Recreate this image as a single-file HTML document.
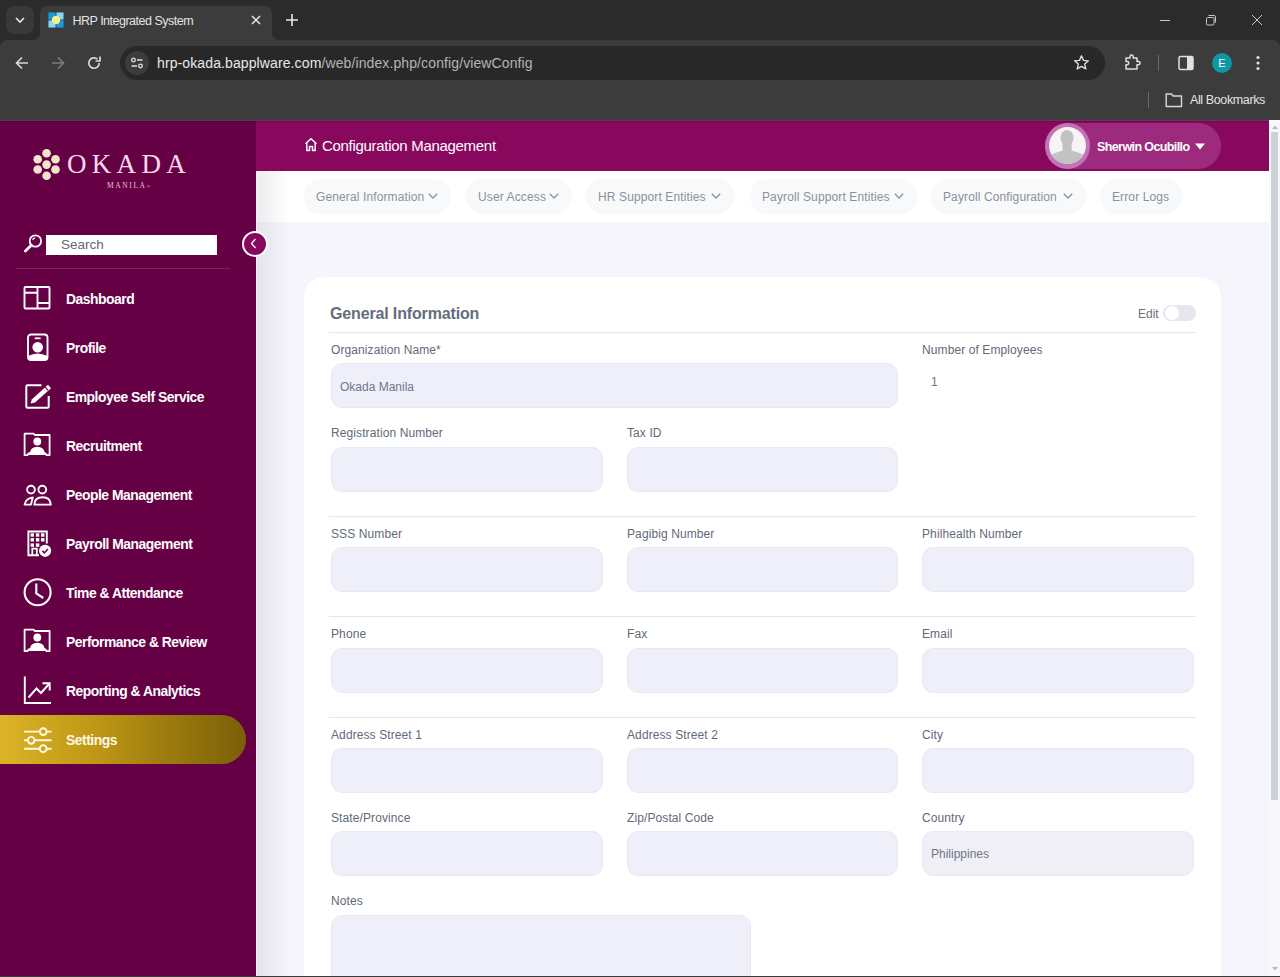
<!DOCTYPE html>
<html><head><meta charset="utf-8">
<style>
*{box-sizing:border-box;margin:0;padding:0}
html,body{width:1280px;height:977px;overflow:hidden;background:#2b2b2b;font-family:"Liberation Sans",sans-serif}
.abs{position:absolute}
/* chrome */
#strip{position:absolute;left:0;top:0;width:1280px;height:40px;background:#2b2b2b}
#tab{position:absolute;left:40px;top:6px;width:232px;height:34px;background:#3c3c3c;border-radius:8px 8px 0 0}
#toolbar{position:absolute;left:0;top:40px;width:1280px;height:80px;background:#3c3c3c;border-radius:8px 8px 0 0}
#addr{position:absolute;left:120px;top:46px;width:985px;height:34px;background:#282828;border-radius:17px}
.ctext{color:#e3e3e3;font-size:12px;position:absolute;white-space:nowrap}
/* page */
#page{position:absolute;left:0;top:120px;width:1280px;height:857px;background:#f5f5fb;overflow:hidden}
#side{position:absolute;left:0;top:0;width:256px;height:857px;background:#660044}
#header{position:absolute;left:256px;top:0;width:1013px;height:51px;background:#88085e}
#tabs{position:absolute;left:256px;top:51px;width:1013px;height:51px;background:#fff}
#scroll{position:absolute;left:1269px;top:0;width:11px;height:857px;background:#f8f8fb}
#thumb{position:absolute;left:2px;top:12px;width:7px;height:668px;background:#cdd1da}
.nav{position:absolute;left:0;width:256px;height:49px}
.nav span{position:absolute;left:66px;top:1.5px;line-height:49px;color:#fff;font-weight:bold;font-size:14.6px;letter-spacing:-0.5px;white-space:nowrap;transform:scaleX(0.95);transform-origin:0 50%}
.nav svg{position:absolute;left:22px;top:10px}
.pill{position:absolute;top:8px;height:35px;background:#f8f9fb;border-radius:17px;color:#8a919c;font-size:12px;letter-spacing:0.12px;line-height:37px;padding-left:12px;white-space:nowrap}
#card{position:absolute;left:304px;top:157px;width:917px;height:760px;background:#fff;border-radius:20px}
.lbl{position:absolute;font-size:12px;color:#626a78;letter-spacing:0.1px;white-space:nowrap}
.inp{position:absolute;height:45px;background:#efeffa;border:1px solid #e9e9f4;border-radius:11px}
.hr{position:absolute;height:1px;background:#e6e6ea}
</style></head><body>
<div id="strip"></div>
<div class="abs" style="left:6px;top:6px;width:28px;height:28px;background:#383838;border-radius:8px"></div>
<svg class="abs" style="left:14px;top:14px" width="12" height="12" viewBox="0 0 12 12"><path d="M2 4 L6 8 L10 4" fill="none" stroke="#e8e8e8" stroke-width="1.6"/></svg>
<div id="tab"></div>
<svg class="abs" style="left:32px;top:32px" width="8" height="8" viewBox="0 0 8 8"><path d="M0 8 Q8 8 8 0 L8 8 Z" fill="#3c3c3c"/></svg>
<svg class="abs" style="left:272px;top:32px" width="8" height="8" viewBox="0 0 8 8"><path d="M8 8 Q0 8 0 0 L0 8 Z" fill="#3c3c3c"/></svg>
<svg class="abs" style="left:48px;top:12px" width="16" height="16" viewBox="0 0 16 16">
<rect x="0" y="0" width="16" height="16" fill="#1d4f6e"/>
<rect x="0.5" y="0.5" width="7" height="7" fill="#1e9ad8"/><rect x="8.5" y="0.5" width="7" height="7" fill="#93d3ea"/>
<rect x="0.5" y="8.5" width="7" height="7" fill="#93d3ea"/><rect x="8.5" y="8.5" width="7" height="7" fill="#1e9ad8"/>
<circle cx="8" cy="8" r="4.2" fill="#f4f08a"/></svg>
<svg class="abs" style="left:251px;top:15px" width="10" height="10" viewBox="0 0 10 10"><path d="M1 1 L9 9 M9 1 L1 9" stroke="#e8e8e8" stroke-width="1.5"/></svg>
<svg class="abs" style="left:285px;top:13px" width="14" height="14" viewBox="0 0 14 14"><path d="M7 1 V13 M1 7 H13" stroke="#e8e8e8" stroke-width="1.6"/></svg>
<svg class="abs" style="left:1160px;top:20px" width="10" height="1" viewBox="0 0 10 1"><rect width="10" height="1" fill="#c8c8c8"/></svg>
<svg class="abs" style="left:1205px;top:14px" width="12" height="12" viewBox="0 0 12 12"><rect x="1.5" y="3.5" width="7.5" height="7.5" rx="1.2" fill="none" stroke="#c8c8c8" stroke-width="1"/><path d="M3.5 1.5 H9 Q10.5 1.5 10.5 3 V8.5" fill="none" stroke="#c8c8c8" stroke-width="1"/></svg>
<svg class="abs" style="left:1251px;top:14px" width="12" height="12" viewBox="0 0 12 12"><path d="M1 1 L11 11 M11 1 L1 11" stroke="#c8c8c8" stroke-width="1"/></svg>
<div id="toolbar"></div>
<svg class="abs" style="left:14px;top:55px" width="16" height="16" viewBox="0 0 16 16"><path d="M14 8 H3 M8 2.5 L2.5 8 L8 13.5" fill="none" stroke="#d8d8d8" stroke-width="1.7"/></svg>
<svg class="abs" style="left:50px;top:55px" width="16" height="16" viewBox="0 0 16 16"><path d="M2 8 H13 M8 2.5 L13.5 8 L8 13.5" fill="none" stroke="#7c7c7c" stroke-width="1.7"/></svg>
<svg class="abs" style="left:86px;top:55px" width="16" height="16" viewBox="0 0 16 16"><path d="M13.2 8 A5.2 5.2 0 1 1 11.5 4.2" fill="none" stroke="#d8d8d8" stroke-width="1.7"/><path d="M14 1.5 V6 H9.5" fill="none" stroke="#d8d8d8" stroke-width="1.7"/></svg>
<div id="addr"></div>
<div class="abs" style="left:125px;top:51px;width:24px;height:24px;border-radius:12px;background:#3c3c3c"></div>
<svg class="abs" style="left:130px;top:56px" width="14" height="14" viewBox="0 0 14 14"><circle cx="3.5" cy="4" r="1.8" fill="none" stroke="#e0e0e0" stroke-width="1.3"/><path d="M7 4 H12.5" stroke="#e0e0e0" stroke-width="1.5"/><circle cx="10.5" cy="10" r="1.8" fill="none" stroke="#e0e0e0" stroke-width="1.3"/><path d="M1.5 10 H7" stroke="#e0e0e0" stroke-width="1.5"/></svg>
<div class="ctext" style="left:72.5px;top:14px;font-size:12.5px;letter-spacing:-0.5px">HRP Integrated System</div>
<div class="ctext" style="left:157px;top:55px;font-size:14px;letter-spacing:0.11px;color:#e8e8e8">hrp-okada.bapplware.com<span style="color:#b4b4b4">/web/index.php/config/viewConfig</span></div>
<svg class="abs" style="left:1073px;top:54px" width="17" height="17" viewBox="0 0 24 24"><path d="M12 2.5 L14.8 9 L21.8 9.6 L16.5 14.2 L18.1 21.1 L12 17.4 L5.9 21.1 L7.5 14.2 L2.2 9.6 L9.2 9 Z" fill="none" stroke="#e0e0e0" stroke-width="1.9" stroke-linejoin="round"/></svg>
<svg class="abs" style="left:1123px;top:53px" width="19" height="19" viewBox="0 0 19 19"><path d="M3 5 H7 V3.5 A1.6 1.6 0 0 1 10.2 3.5 V5 H14 V8.5 H15.5 A1.6 1.6 0 0 1 15.5 11.7 H14 V16 H3 V11.7 H4.2 A1.6 1.6 0 0 0 4.2 8.5 H3 Z" fill="none" stroke="#e0e0e0" stroke-width="1.5" stroke-linejoin="round"/></svg>
<div class="abs" style="left:1158px;top:55px;width:1px;height:16px;background:#6a6a6a"></div>
<svg class="abs" style="left:1178px;top:55px" width="16" height="16" viewBox="0 0 16 16"><rect x="1" y="1.5" width="14" height="13" rx="1.5" fill="none" stroke="#e0e0e0" stroke-width="1.5"/><rect x="9" y="1.5" width="6" height="13" fill="#e0e0e0"/></svg>
<div class="abs" style="left:1212px;top:53px;width:20px;height:20px;border-radius:10px;background:#0f97a4;color:#fff;font-size:11px;line-height:20px;text-align:center">E</div>
<svg class="abs" style="left:1255px;top:55px" width="6" height="16" viewBox="0 0 6 16"><circle cx="3" cy="2.5" r="1.6" fill="#e0e0e0"/><circle cx="3" cy="8" r="1.6" fill="#e0e0e0"/><circle cx="3" cy="13.5" r="1.6" fill="#e0e0e0"/></svg>
<div class="abs" style="left:1148px;top:92px;width:1px;height:16px;background:#6a6a6a"></div>
<svg class="abs" style="left:1165px;top:92px" width="18" height="16" viewBox="0 0 18 16"><path d="M1.2 2 H6.5 L8.2 4 H16.5 V14.5 H1.2 Z" fill="none" stroke="#d8d8d8" stroke-width="1.4" stroke-linejoin="round"/></svg>
<div class="ctext" style="left:1190px;top:93px;font-size:12.5px;letter-spacing:-0.38px">All Bookmarks</div>

<div id="page">
  <div id="side">
  <svg class="abs" style="left:30px;top:28px" width="34" height="36" viewBox="0 0 34 36">
   <g fill="#f3e4cc"><circle cx="16.6" cy="5.3" r="4.3"/><circle cx="16.6" cy="16.6" r="4.3"/><circle cx="16.6" cy="27.8" r="4.3"/>
   <circle cx="7.7" cy="11.3" r="4.3"/><circle cx="25.5" cy="11.3" r="4.3"/><circle cx="7.7" cy="21.5" r="4.3"/><circle cx="25.5" cy="21.5" r="4.3"/></g></svg>
  <div class="abs" style="left:67px;top:28px;font-family:'Liberation Serif',serif;font-size:27px;color:#f7d9e8;letter-spacing:5.3px;line-height:32px;white-space:nowrap">OKADA</div>
  <div class="abs" style="left:107px;top:60.5px;font-family:'Liberation Serif',serif;font-size:7.5px;color:#e9c2da;letter-spacing:1.6px;line-height:10px;white-space:nowrap">MANILA<span style="font-size:5px;letter-spacing:0">&reg;</span></div>
  <svg class="abs" style="left:23px;top:113px" width="20" height="20" viewBox="0 0 20 20"><circle cx="12.4" cy="8" r="5.7" fill="none" stroke="#fff" stroke-width="1.8"/><path d="M9.6 7.2 A3 3 0 0 1 12.2 4.8" fill="none" stroke="#fff" stroke-width="1.2"/><path d="M8.3 12.2 L2.4 18.1" stroke="#fff" stroke-width="2.8" stroke-linecap="round"/></svg>
  <div class="abs" style="left:46px;top:115px;width:171px;height:20px;background:#fff"></div>
  <div class="abs" style="left:61px;top:115px;font-size:13.5px;line-height:20px;color:#676776">Search</div>
  <div class="abs" style="left:16px;top:148px;width:214px;height:1px;background:#7c2462"></div>
  <div class="nav" style="top:153px"><svg width="30" height="30" viewBox="0 0 30 30"><g fill="none" stroke="#fff" stroke-width="1.9"><rect x="2.5" y="4" width="25" height="21.5" rx="1"/><path d="M15.5 4 V25.5 M2.5 9.7 H15.5 M15.5 20 H27.5"/></g></svg><span>Dashboard</span></div>
  <div class="nav" style="top:202px"><svg width="30" height="30" viewBox="0 0 30 30"><rect x="6" y="2.5" width="19.5" height="25.5" rx="3" fill="none" stroke="#fff" stroke-width="1.9"/><path d="M12.8 6.3 H18.6" stroke="#fff" stroke-width="1.8"/><circle cx="15.7" cy="15.2" r="5.3" fill="#fff"/><path d="M6 24 Q15.7 19 25.5 24 V25 Q25.5 28 22.5 28 H9 Q6 28 6 25 Z" fill="#fff"/></svg><span>Profile</span></div>
  <div class="nav" style="top:251px"><svg width="30" height="30" viewBox="0 0 30 30"><path d="M19.5 4.3 H5.5 Q4.3 4.3 4.3 5.5 V25.5 Q4.3 26.7 5.5 26.7 H25.5 Q26.7 26.7 26.7 25.5 V15" fill="none" stroke="#fff" stroke-width="2"/><path d="M8.5 22.5 L10 18.2 L26 3.8 L29 7.2 L13 21.6 Z" fill="#fff"/><path d="M23.1 5.9 L26.1 9.4" stroke="#660044" stroke-width="1.1"/></svg><span>Employee Self Service</span></div>
  <div class="nav" style="top:300px"><svg width="30" height="30" viewBox="0 0 30 30"><path d="M2.6 25.2 V3.6 H11.5 L13 5 H27.6 V25.2 H24.5 Q24 23 22.5 23.2 V24 H7.5 V23.2 Q6 23 5.5 25.2 Z" fill="none" stroke="#fff" stroke-width="1.8" stroke-linejoin="round"/><circle cx="15.3" cy="11.5" r="3.9" fill="#fff"/><path d="M7.6 23.3 Q8.5 16.8 15.3 16.8 Q22.1 16.8 23 23.3 Z" fill="#fff"/></svg><span>Recruitment</span></div>
  <div class="nav" style="top:349px"><svg width="30" height="30" viewBox="0 0 30 30"><g fill="none" stroke="#fff" stroke-width="1.9"><circle cx="9" cy="10.6" r="3.9"/><circle cx="20.3" cy="10.6" r="3.9"/><path d="M12.4 25.6 Q12.6 18.2 20.6 18.2 Q28.4 18.2 28.7 25.6 Z"/><path d="M10.8 18.4 Q3.6 19.6 2.6 25.6 H8.9 Z" stroke-linejoin="round"/></g></svg><span>People Management</span></div>
  <div class="nav" style="top:398px"><svg width="30" height="30" viewBox="0 0 30 30"><path d="M17 27.2 H6.4 V3.5 H24.8 V15.5" fill="none" stroke="#fff" stroke-width="1.9"/><g fill="#fff"><rect x="8.6" y="5.3" width="3.4" height="3.4"/><rect x="13.9" y="5.3" width="3.4" height="3.4"/><rect x="19" y="5.3" width="3.4" height="3.4"/><rect x="8.6" y="10.1" width="3.4" height="3.4"/><rect x="13.9" y="10.1" width="3.4" height="3.4"/><rect x="19" y="10.1" width="3.4" height="3.4"/><rect x="8.6" y="15.4" width="3.4" height="3.4"/><rect x="13.9" y="15.4" width="3.4" height="3.4"/></g><path d="M10.3 27.2 V20.6 H14.8 V27.2" fill="none" stroke="#fff" stroke-width="1.8"/><circle cx="23.1" cy="22.8" r="6.1" fill="#fff"/><path d="M20.4 22.9 L22.4 24.9 L25.9 20.9" fill="none" stroke="#660044" stroke-width="1.5"/></svg><span>Payroll Management</span></div>
  <div class="nav" style="top:447px"><svg width="30" height="30" viewBox="0 0 30 30"><circle cx="15.6" cy="15.2" r="13" fill="none" stroke="#fff" stroke-width="2.1"/><path d="M14.3 6.5 V16.5 L21.3 21" fill="none" stroke="#fff" stroke-width="2.1"/></svg><span>Time &amp; Attendance</span></div>
  <div class="nav" style="top:496px"><svg width="30" height="30" viewBox="0 0 30 30"><path d="M2.6 25.2 V3.6 H11.5 L13 5 H27.6 V25.2 H24.5 Q24 23 22.5 23.2 V24 H7.5 V23.2 Q6 23 5.5 25.2 Z" fill="none" stroke="#fff" stroke-width="1.8" stroke-linejoin="round"/><circle cx="15.3" cy="11.5" r="3.9" fill="#fff"/><path d="M7.6 23.3 Q8.5 16.8 15.3 16.8 Q22.1 16.8 23 23.3 Z" fill="#fff"/></svg><span>Performance &amp; Review</span></div>
  <div class="nav" style="top:545px"><svg width="30" height="30" viewBox="0 0 30 30"><path d="M2.8 1.5 V28 H29" fill="none" stroke="#fff" stroke-width="1.9"/><path d="M6.5 22.5 L14.5 13.5 L19 18 L27 9" fill="none" stroke="#fff" stroke-width="1.9"/><path d="M20.5 8.2 H27.7 V15.5" fill="none" stroke="#fff" stroke-width="1.9"/></svg><span>Reporting &amp; Analytics</span></div>
  <div class="abs" style="left:0;top:595px;width:246px;height:49px;border-radius:0 24.5px 24.5px 0;background:linear-gradient(90deg,#dcb427 0%,#bd9615 40%,#8f700b 80%,#7a5f08 100%)"></div>
  <div class="nav" style="top:594px"><svg width="30" height="30" viewBox="0 0 30 30"><g fill="none" stroke="#fff8e2" stroke-width="1.9"><path d="M2 7.6 H17.8 M24.6 7.6 H29.5 M2 16.3 H5.8 M12.6 16.3 H29.5 M2 24.7 H17.8 M24.6 24.7 H29.5"/><circle cx="21.2" cy="7.6" r="3.4"/><circle cx="9.2" cy="16.3" r="3.4"/><circle cx="21.2" cy="24.7" r="3.4"/></g></svg><span style="color:#fff8e2">Settings</span></div>
</div>
  <div id="header">
  <svg class="abs" style="left:48px;top:17px" width="14" height="15" viewBox="0 0 14 15"><path d="M1.5 6.8 L7 1.8 L12.5 6.8 M2.8 5.8 V13.5 H5.5 V9.5 H8.5 V13.5 H11.2 V5.8" fill="none" stroke="#fff" stroke-width="1.5" stroke-linejoin="round"/></svg>
  <div class="abs" style="left:66px;top:0;line-height:51px;color:#fff;font-size:15px;letter-spacing:-0.3px;white-space:nowrap">Configuration Management</div>
  <div class="abs" style="left:789px;top:2.5px;width:176px;height:46px;border-radius:23px;background:#9d2b7d"></div>
  <div class="abs" style="left:789px;top:2.5px;width:45px;height:46px;border-radius:50%;background:#c273b3"></div>
  <svg class="abs" style="left:793px;top:7px" width="37" height="37" viewBox="0 0 37 37"><defs><clipPath id="av"><circle cx="18.5" cy="18.5" r="18.5"/></clipPath></defs><g clip-path="url(#av)"><rect width="37" height="37" fill="#f7f3f6"/><ellipse cx="18" cy="10.8" rx="6.5" ry="7.8" fill="#c2c2c2"/><path d="M0 37 V28.8 Q6 25.8 13.6 23.6 V15 H22.6 V23.6 Q30 25.8 37 28.8 V37 Z" fill="#c2c2c2"/></g></svg>
  <div class="abs" style="left:841px;top:1.5px;line-height:51px;color:#fff;font-size:12.5px;font-weight:bold;letter-spacing:-0.6px;white-space:nowrap">Sherwin Ocubillo</div>
  <svg class="abs" style="left:939px;top:23px" width="10" height="7" viewBox="0 0 10 7"><path d="M0 0.5 H10 L5 6.5 Z" fill="#fff"/></svg>
</div>
  <div id="tabs">
  <div class="pill" style="left:48px;width:147px">General Information<svg style="position:absolute;right:13px;top:14px" width="10" height="7" viewBox="0 0 10 7"><path d="M0.8 0.8 L5 5 L9.2 0.8" fill="none" stroke="#8a919c" stroke-width="1.3"/></svg></div>
  <div class="pill" style="left:210px;width:106px">User Access<svg style="position:absolute;right:13px;top:14px" width="10" height="7" viewBox="0 0 10 7"><path d="M0.8 0.8 L5 5 L9.2 0.8" fill="none" stroke="#8a919c" stroke-width="1.3"/></svg></div>
  <div class="pill" style="left:330px;width:148px">HR Support Entities<svg style="position:absolute;right:13px;top:14px" width="10" height="7" viewBox="0 0 10 7"><path d="M0.8 0.8 L5 5 L9.2 0.8" fill="none" stroke="#8a919c" stroke-width="1.3"/></svg></div>
  <div class="pill" style="left:494px;width:167px">Payroll Support Entities<svg style="position:absolute;right:13px;top:14px" width="10" height="7" viewBox="0 0 10 7"><path d="M0.8 0.8 L5 5 L9.2 0.8" fill="none" stroke="#8a919c" stroke-width="1.3"/></svg></div>
  <div class="pill" style="left:675px;width:155px">Payroll Configuration<svg style="position:absolute;right:13px;top:14px" width="10" height="7" viewBox="0 0 10 7"><path d="M0.8 0.8 L5 5 L9.2 0.8" fill="none" stroke="#8a919c" stroke-width="1.3"/></svg></div>
  <div class="pill" style="left:844px;width:82px">Error Logs</div>
</div>
  <div id="card">
<div class="abs" style="left:26px;top:27px;font-size:16px;font-weight:bold;color:#636d7c;letter-spacing:-0.15px;line-height:20px;white-space:nowrap">General Information</div>
<div class="abs" style="left:834px;top:30px;font-size:12px;color:#6a707c;line-height:14px">Edit</div>
<div class="abs" style="left:859px;top:28px;width:33px;height:16px;border-radius:8px;background:#e6e7ec"></div>
<div class="abs" style="left:861px;top:29px;width:14px;height:14px;border-radius:7px;background:#fff"></div>
<div class="hr" style="left:25px;top:55px;width:867px"></div>
<div class="lbl" style="left:27px;top:65.5px">Organization Name*</div>
<div class="inp" style="left:27px;top:86px;width:567px;height:45px"></div>
<div class="abs" style="left:36px;top:102.5px;font-size:12px;color:#70768a;line-height:14px;white-space:nowrap">Okada Manila</div>
<div class="lbl" style="left:618px;top:65.5px">Number of Employees</div>
<div class="abs" style="left:627px;top:98px;font-size:12px;color:#70768a;line-height:14px">1</div>
<div class="lbl" style="left:27px;top:148.5px">Registration Number</div>
<div class="inp" style="left:27px;top:170px;width:272px;height:45px"></div>
<div class="lbl" style="left:323px;top:148.5px">Tax ID</div>
<div class="inp" style="left:323px;top:170px;width:271px;height:45px"></div>
<div class="hr" style="left:25px;top:239px;width:867px"></div>
<div class="lbl" style="left:27px;top:249.5px">SSS Number</div>
<div class="inp" style="left:27px;top:270px;width:272px;height:45px"></div>
<div class="lbl" style="left:323px;top:249.5px">Pagibig Number</div>
<div class="inp" style="left:323px;top:270px;width:271px;height:45px"></div>
<div class="lbl" style="left:618px;top:249.5px">Philhealth Number</div>
<div class="inp" style="left:618px;top:270px;width:272px;height:45px"></div>
<div class="hr" style="left:25px;top:339px;width:867px"></div>
<div class="lbl" style="left:27px;top:349.5px">Phone</div>
<div class="inp" style="left:27px;top:371px;width:272px;height:45px"></div>
<div class="lbl" style="left:323px;top:349.5px">Fax</div>
<div class="inp" style="left:323px;top:371px;width:271px;height:45px"></div>
<div class="lbl" style="left:618px;top:349.5px">Email</div>
<div class="inp" style="left:618px;top:371px;width:272px;height:45px"></div>
<div class="hr" style="left:25px;top:440px;width:867px"></div>
<div class="lbl" style="left:27px;top:450.5px">Address Street 1</div>
<div class="inp" style="left:27px;top:471px;width:272px;height:45px"></div>
<div class="lbl" style="left:323px;top:450.5px">Address Street 2</div>
<div class="inp" style="left:323px;top:471px;width:271px;height:45px"></div>
<div class="lbl" style="left:618px;top:450.5px">City</div>
<div class="inp" style="left:618px;top:471px;width:272px;height:45px"></div>
<div class="lbl" style="left:27px;top:533.5px">State/Province</div>
<div class="inp" style="left:27px;top:554px;width:272px;height:45px"></div>
<div class="lbl" style="left:323px;top:533.5px">Zip/Postal Code</div>
<div class="inp" style="left:323px;top:554px;width:271px;height:45px"></div>
<div class="lbl" style="left:618px;top:533.5px">Country</div>
<div class="inp" style="left:618px;top:554px;width:272px;height:45px;background:#efeff5"></div>
<div class="abs" style="left:627px;top:569.5px;font-size:12px;color:#70768a;line-height:14px;white-space:nowrap">Philippines</div>
<div class="lbl" style="left:27px;top:616.5px">Notes</div>
<div class="inp" style="left:27px;top:638px;width:420px;height:85px"></div>
</div>
  <div class="abs" style="left:257px;top:51px;width:32px;height:806px;background:linear-gradient(90deg,rgba(40,40,70,0.085),rgba(40,40,70,0))"></div>
  <div class="abs" style="left:256px;top:51px;width:1px;height:806px;background:#f6f0f5"></div>
  <div class="abs" style="left:242px;top:110.5px;width:26px;height:26px;border-radius:50%;background:#88085e;border:2px solid #fff"></div>
  <svg class="abs" style="left:250px;top:118px" width="7" height="11" viewBox="0 0 7 11"><path d="M5.5 1 L1.5 5.5 L5.5 10" fill="none" stroke="#fff" stroke-width="1.3"/></svg>
  <div id="scroll"><div id="thumb"></div><svg class="abs" style="left:3px;top:5px" width="6" height="4" viewBox="0 0 6 4"><path d="M0 4 L3 0.5 L6 4 Z" fill="#b8b8bc"/></svg><svg class="abs" style="left:3px;top:847px" width="6" height="4" viewBox="0 0 6 4"><path d="M0 0 L3 3.5 L6 0 Z" fill="#b8b8bc"/></svg></div>
  <div class="abs" style="left:0;top:856px;width:1280px;height:1px;background:#3a3a3a"></div>
  <div class="abs" style="left:0;top:0;width:1269px;height:1px;background:#5e3a56"></div>
  <div class="abs" style="left:0;top:1px;width:1269px;height:1px;background:rgba(20,0,20,0.18)"></div>
</div>
</body></html>
